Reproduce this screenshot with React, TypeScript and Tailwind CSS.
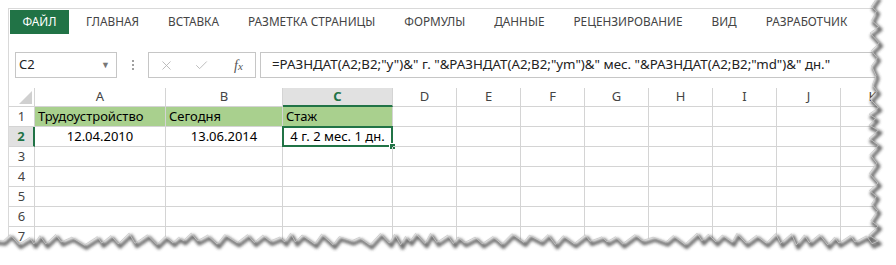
import { X, Check } from "lucide-react";

const font = { fontFamily: '"Noto Sans", "Open Sans", sans-serif' };

// torn paper edge points, fixed seed so the picture is stable
function makeEdges() {
  let s = 11;
  const rnd = () => {
    s = (s * 9301 + 49297) % 233280;
    return s / 233280;
  };
  const right: [number, number][] = [];
  let y = -4;
  let i = 0;
  while (y < 236) {
    const x = 874 + (i % 2 ? -1 : 1) * (1.5 + rnd() * 4);
    right.push([x, y]);
    y += 4 + rnd() * 7;
    i++;
  }
  right.push([878, 241]);
  const bottom: [number, number][] = [];
  let x = 872;
  i = 0;
  while (x > -6) {
    const yy = 239 + (i % 2 ? -1 : 1) * (1.5 + rnd() * 4.5);
    bottom.push([x, yy]);
    x -= 4 + rnd() * 9;
    i++;
  }
  bottom.push([-6, 240]);
  return [...right, ...bottom];
}

const edge = makeEdges();
const edgeLine = edge.map((p) => p.join(",")).join(" ");
const outside = edgeLine + " -6,275 905,275 905,-6";

const tabs = [
  "ГЛАВНАЯ",
  "ВСТАВКА",
  "РАЗМЕТКА СТРАНИЦЫ",
  "ФОРМУЛЫ",
  "ДАННЫЕ",
  "РЕЦЕНЗИРОВАНИЕ",
  "ВИД",
  "РАЗРАБОТЧИК",
];

const cols = ["A", "B", "C", "D", "E", "F", "G", "H", "I", "J", "K"];

function Cell({
  children,
  className = "",
}: {
  children?: React.ReactNode;
  className?: string;
}) {
  return (
    <div
      className={
        "relative flex items-end border-r border-b border-[#d4d4d4] px-[3px] pb-[1px] text-[13px] leading-[18px] text-black whitespace-nowrap overflow-visible " +
        className
      }
    >
      {children}
    </div>
  );
}

export default function App() {
  const rows = [3, 4, 5, 6, 7];
  return (
    <div className="relative h-[265px] w-[896px] overflow-hidden bg-white" style={font}>
      <div className="ml-2 mt-2 h-[260px] w-[890px] border-l border-t border-[#d9d9d9]">
        {/* ribbon tabs */}
        <div className="ml-px mt-px flex h-6 items-center text-[11.8px] text-[#444]">
          <div className="flex h-6 w-[59px] items-center justify-center bg-[#217346] text-white">
            ФАЙЛ
          </div>
          <div className="ml-[17px] flex gap-[29px]">
            {tabs.map((t) => (
              <span key={t}>{t}</span>
            ))}
          </div>
        </div>

        {/* formula bar */}
        <div className="mt-[18px] flex h-[26px]">
          <div className="ml-[6px] flex w-[102px] items-center justify-between border border-[#c6c6c6] pl-[3px] pr-[6px] text-[13px] text-[#222]">
            <span>C2</span>
            <span className="text-[9px] text-[#777]">▼</span>
          </div>
          <div className="flex w-[31px] flex-col items-center justify-center gap-[2px]">
            <span className="h-[2px] w-[2px] bg-[#a0a0a0]" />
            <span className="h-[2px] w-[2px] bg-[#a0a0a0]" />
            <span className="h-[2px] w-[2px] bg-[#a0a0a0]" />
          </div>
          <div className="flex w-[108px] items-center border border-[#c6c6c6] text-[#b4b4b4]">
            <X size={15} strokeWidth={1.4} className="ml-[10px]" />
            <Check size={15} strokeWidth={1.4} className="ml-[20px]" />
            <span
              className="ml-[25px] text-[14px] italic text-[#555]"
              style={{ fontFamily: '"Liberation Serif", serif' }}
            >
              f<span className="text-[11px]">x</span>
            </span>
          </div>
          <div className="ml-[4px] flex flex-1 items-center border border-[#c6c6c6] pl-[11px] text-[13.3px] text-[#222] whitespace-nowrap">
            =РАЗНДАТ(A2;B2;"y")&amp;" г. "&amp;РАЗНДАТ(A2;B2;"ym")&amp;" мес. "&amp;РАЗНДАТ(A2;B2;"md")&amp;" дн."
          </div>
        </div>

        {/* sheet */}
        <div className="mt-[10px] grid grid-cols-[26px_131px_117px_110px_64px_64px_64px_64px_64px_64px_64px_64px] grid-rows-[19px_20px_20px_20px_20px_20px_20px_20px]">
          <div className="relative border-r border-b border-[#d4d4d4]">
            <div className="absolute bottom-[2px] right-[2px] h-0 w-0 [border-bottom:13px_solid_#d0d0d0] [border-left:13px_solid_transparent]" />
          </div>
          {cols.map((c) => (
            <div
              key={c}
              className={
                c === "C"
                  ? "flex items-center justify-center border-r border-[#d4d4d4] border-b-2 border-b-[#217346] bg-[#e1e1e1] text-[13px] font-bold text-[#217346]"
                  : "flex items-center justify-center border-r border-b border-[#d4d4d4] text-[13px] text-[#444]"
              }
            >
              {c}
            </div>
          ))}

          {/* row 1 */}
          <div className="flex items-center justify-center border-r border-b border-[#d4d4d4] text-[13px] text-[#444]">
            1
          </div>
          <Cell className="bg-[#a9d08e]">Трудоустройство</Cell>
          <Cell className="bg-[#a9d08e]">Сегодня</Cell>
          <Cell className="bg-[#a9d08e]">Стаж</Cell>
          {cols.slice(3).map((c) => (
            <Cell key={c} />
          ))}

          {/* row 2 */}
          <div className="flex items-center justify-center border-r-2 border-r-[#217346] border-b border-[#d4d4d4] bg-[#e1e1e1] text-[13px] font-bold text-[#217346]">
            2
          </div>
          <Cell className="justify-center">12.04.2010</Cell>
          <Cell className="justify-center">13.06.2014</Cell>
          <Cell className="justify-center">
            4 г. 2 мес. 1 дн.
            <div className="pointer-events-none absolute -left-px -top-px bottom-[-1px] right-[-1px] border-2 border-[#217346]" />
            <div className="absolute bottom-[-4px] right-[-4px] h-[7px] w-[7px] border border-white bg-[#217346]" />
          </Cell>
          {cols.slice(3).map((c) => (
            <Cell key={c} />
          ))}

          {rows.map((r) => (
            <div key={r} className="contents">
              <div className="flex items-center justify-center border-r border-b border-[#d4d4d4] text-[13px] text-[#444]">
                {r}
              </div>
              {cols.map((c) => (
                <Cell key={c} />
              ))}
            </div>
          ))}
        </div>
      </div>

      {/* torn paper edge */}
      <svg className="absolute inset-0" width="896" height="265" viewBox="0 0 896 265">
        <defs>
          <filter id="blur" x="-5%" y="-5%" width="110%" height="110%">
            <feGaussianBlur stdDeviation="1.6" />
          </filter>
        </defs>
        <polygon points={outside} fill="#ffffff" />
        <polyline
          points={edgeLine}
          fill="none"
          stroke="#3a3a3a"
          strokeWidth="3.5"
          strokeLinejoin="round"
          opacity="0.75"
          filter="url(#blur)"
          transform="translate(2,3)"
        />
        <polyline points={edgeLine} fill="none" stroke="#c8c8c8" strokeWidth="0.8" />
      </svg>
    </div>
  );
}
